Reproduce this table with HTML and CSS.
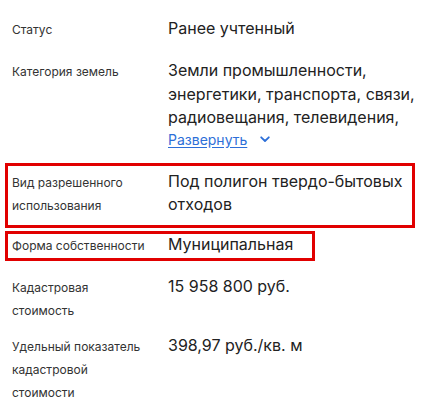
FILE: index.html
```html
<!DOCTYPE html>
<html lang="ru">
<head>
<meta charset="utf-8">
<title>Сведения об участке</title>
<link rel="stylesheet" href="styles.css">
</head>
<body>
<div class="list">
  <div class="row">
    <div class="label">Статус</div>
    <div class="value">Ранее учтенный</div>
  </div>
  <div class="row row-category">
    <div class="label">Категория земель</div>
    <div class="value">
      <div class="clamp">Земли промышленности, энергетики, транспорта, связи, радиовещания, телевидения,</div>
      <div class="more-line"><a class="more" href="#">Развернуть</a><svg class="chev" width="10" height="7" viewBox="0 0 10 7"><path d="M1.2 1.3 L5 5 L8.8 1.3" fill="none" stroke="currentColor" stroke-width="1.8" stroke-linecap="round" stroke-linejoin="round"/></svg></div>
    </div>
  </div>
  <div class="row mark mark-wide">
    <div class="label">Вид разрешенного использования</div>
    <div class="value">Под полигон твердо-бытовых отходов</div>
  </div>
  <div class="row mark mark-short">
    <div class="label">Форма собственности</div>
    <div class="value">Муниципальная</div>
  </div>
  <div class="row row-cost">
    <div class="label">Кадастровая<br>стоимость</div>
    <div class="value">15 958 800 руб.</div>
  </div>
  <div class="row">
    <div class="label">Удельный показатель<br>кадастровой<br>стоимости</div>
    <div class="value">398,97 руб./кв. м</div>
  </div>
</div>
</body>
</html>
```

FILE: styles.css
```css
html, body {
  margin: 0;
  padding: 0;
  background: #ffffff;
}

body {
  font-family: Inter, "Noto Sans", sans-serif;
  color: #222222;
}

.list {
  width: 406px;
  padding: 17px 0 0 12px;
}

.row {
  display: grid;
  grid-template-columns: 156px 1fr;
  margin-bottom: 18px;
}

.label {
  font-size: 12px;
  line-height: 23px;
  color: #333333;
  padding-top: 1px;
  padding-right: 8px;
}

.value {
  font-size: 16px;
  line-height: 23.5px;
  color: #222222;
}

.clamp {
  min-height: 70.5px;
}

.more-line {
  display: flex;
  align-items: center;
  height: 20px;
}

.more {
  font-size: 14px;
  line-height: 20px;
  color: #2d6fd8;
  text-decoration: underline;
  text-underline-offset: 2px;
}

.chev {
  color: #2d6fd8;
  margin-left: 13px;
  margin-top: 0;
}

.row-category {
  margin-bottom: 20px;
}

.mark-wide {
  margin-bottom: 16px;
}

.row-cost {
  margin-top: 3px;
  margin-bottom: 12px;
}

.mark {
  position: relative;
}

.mark::after {
  content: "";
  position: absolute;
  border: 3px solid #e10000;
  pointer-events: none;
}

.mark-wide::after {
  left: -7px;
  top: -7px;
  right: 3px;
  bottom: -11px;
}

.mark-short::after {
  left: -7px;
  top: -2px;
  right: 103px;
  bottom: -4px;
}
```
